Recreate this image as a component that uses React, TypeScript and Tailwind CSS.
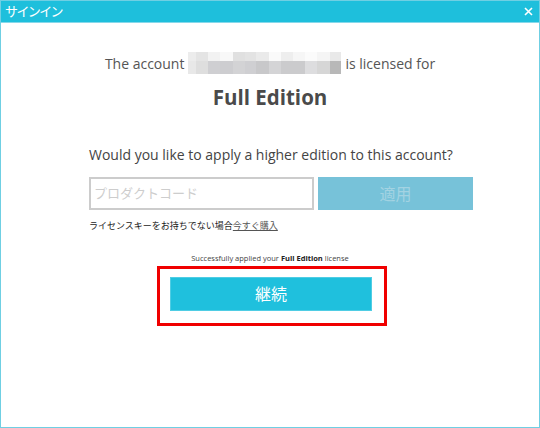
import React from "react";

const top = ["#ececec","#e4e4e4","#f2f2f2","#f8f8f8","#e0e0e0","#e3e3e3","#eaeaea","#fafafa","#eeeeee","#f6f6f6","#fbfbfb","#f5f5f5","#e9e9e9"];
const bot = ["#e8e8e8","#dedede","#cfcfd2","#cdcdd0","#d3d3d5","#cfcfd2","#c8c8ca","#d4d4d6","#cbcbcd","#cbcbcd","#dddddf","#d6d6d6","#b8b8b8"];
const xs = [0, 8, 20, 32, 45, 57, 68, 81, 93, 105, 117, 129, 142, 153];

function Blur() {
  return (
    <svg width="153" height="22" viewBox="0 0 153 22" className="mx-[4px] inline-block align-middle">
      {top.map((c, i) => (
        <rect key={"t" + i} x={xs[i]} y={0} width={xs[i + 1] - xs[i]} height={9} fill={c} />
      ))}
      {bot.map((c, i) => (
        <rect key={"b" + i} x={xs[i]} y={9} width={xs[i + 1] - xs[i]} height={13} fill={c} />
      ))}
    </svg>
  );
}

export default function App() {
  const font = { fontFamily: '"Open Sans", "Noto Sans CJK JP", sans-serif' };
  return (
    <div className="w-[540px] h-[428px] bg-white border border-[#6fcfe3] flex flex-col" style={font}>
      <div className="h-[22px] bg-[#1ebfdc] border-b border-[#86d8ea] flex items-center justify-between pl-[4px] pr-[6px] shrink-0">
        <span className="text-white text-[13px] tracking-[-1.6px] leading-none">サインイン</span>
        <svg width="9" height="9" viewBox="0 0 9 9">
          <path d="M1 1L8 8M8 1L1 8" stroke="white" strokeWidth="1.6" />
        </svg>
      </div>
      <div className="flex flex-col">
        <div className="mt-[28px] flex items-center justify-center text-[14px] text-[#555] h-[24px]">
          <span>The account</span>
          <Blur />
          <span>is licensed for</span>
        </div>
        <div className="mt-[9px] text-center text-[20.5px] font-bold text-[#4a4a4a] leading-[26px]">Full Edition</div>
        <div className="mt-[34px] pl-[88px] text-[14px] text-[#444] leading-[22px]">
          Would you like to apply a higher edition to this account?
        </div>
        <div className="mt-[11px] pl-[88px] flex gap-[4px]">
          <div className="w-[225px] h-[33px] border-2 border-[#cccccc] flex items-center pl-[3px] text-[13px] text-[#cdcdcd]">
            プロダクトコード
          </div>
          <div className="w-[155px] h-[33px] bg-[#77c2d9] flex items-center justify-center text-[16px] text-[#a3d3e2]">
            適用
          </div>
        </div>
        <div className="mt-[8px] pl-[88px] text-[9px] text-[#1a1a1a] leading-[16px]">
          ライセンスキーをお持ちでない場合<span className="underline text-[#555]">今すぐ購入</span>
        </div>
        <div className="mt-[18px] text-center text-[7.5px] text-[#444] leading-[12px]">
          Successfully applied your <span className="font-bold text-[#222]">Full Edition</span> license
        </div>
        <div className="mt-[2px] ml-[156px] w-[230px] h-[60px] border-[3px] border-[#f00000] pt-[8px] pl-[10px]">
          <div className="w-[202px] h-[34px] bg-[#1fc0dd] border border-[#4fcde4] flex items-center justify-center text-white text-[16px]">
            継続
          </div>
        </div>
      </div>
    </div>
  );
}
